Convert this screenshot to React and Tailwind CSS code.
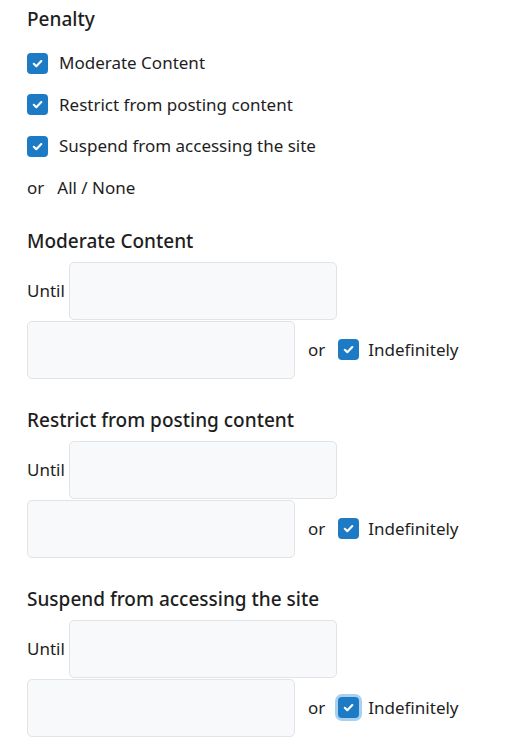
const Check = ({ ring = false }) => (
  <span
    className={`inline-flex h-[21px] w-[21px] shrink-0 items-center justify-center rounded-[4px] bg-[#1d7bc5] ${
      ring ? "ring-[3px] ring-[#a9d0ef]" : ""
    }`}
  >
    <svg viewBox="0 0 12 12" className="h-[13px] w-[13px]" fill="none">
      <path d="M2.6 6.3l2.3 2.2 4.6-4.7" stroke="#fff" strokeWidth="2" strokeLinecap="round" strokeLinejoin="round" />
    </svg>
  </span>
);

const Field = ({ className = "" }) => (
  <div className={`h-[58px] w-[268px] rounded-[5px] border border-[#e1e3e6] bg-[#f8f9fa] ${className}`} />
);

const Section = ({ title, ring }) => (
  <div className="mt-[29px]">
    <p className="text-[19px] font-medium leading-6">{title}</p>
    <div className="mt-[9px] flex items-center gap-[4px]">
      <span className="w-[38px]">Until</span>
      <Field />
    </div>
    <div className="mt-px flex items-center">
      <Field />
      <span className="ml-[13px]">or</span>
      <span className="ml-[13px]">
        <Check ring={ring} />
      </span>
      <span className="ml-[9px]">Indefinitely</span>
    </div>
  </div>
);

export default function App() {
  const penalties = ["Moderate Content", "Restrict from posting content", "Suspend from accessing the site"];
  return (
    <div className="min-h-screen bg-white px-[27px] pt-[7px] text-[17px] leading-6 text-[#1e1e1e] [font-family:'Noto_Sans',sans-serif]">
      <p className="text-[19px] font-medium leading-6">Penalty</p>
      <div className="mt-[20px] space-y-[17.5px]">
        {penalties.map(p => (
          <label key={p} className="flex items-center gap-[11px]">
            <Check />
            <span>{p}</span>
          </label>
        ))}
        <div className="flex items-center gap-[13px]">
          <span>or</span>
          <span>All / None</span>
        </div>
      </div>
      <Section title="Moderate Content" />
      <Section title="Restrict from posting content" />
      <Section title="Suspend from accessing the site" ring />
    </div>
  );
}
